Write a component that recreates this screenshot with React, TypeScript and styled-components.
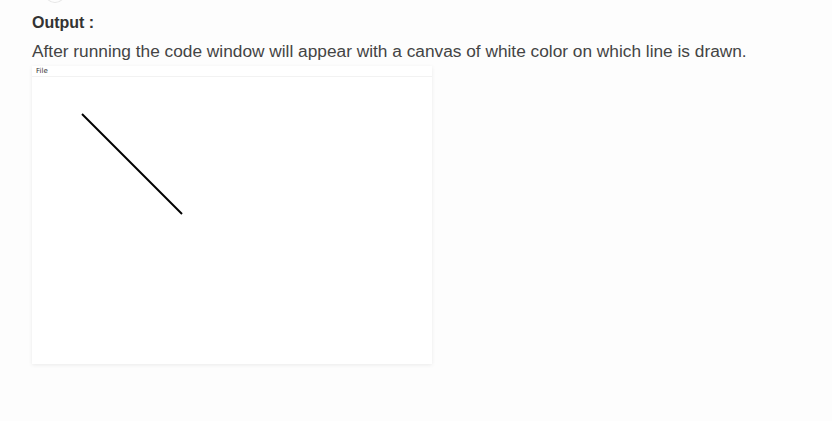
import React from "react"
import styled, { createGlobalStyle } from "styled-components"

const GlobalStyle = createGlobalStyle`
	html, body {
		margin: 0;
		padding: 0;
		background: #fdfdfd;
	}
	body {
		font-family: "Liberation Sans", Arial, sans-serif;
		color: #444;
	}
`

const Page = styled.main`
	position: relative;
	padding: 12px 32px 0 32px;
	height: 421px;
	box-sizing: border-box;
	overflow: hidden;
`

const TopDot = styled.span`
	position: absolute;
	left: 44px;
	top: -20px;
	width: 22px;
	height: 23px;
	border-radius: 50%;
	border: 1px solid #e6e6e6;
	box-sizing: border-box;
`

const Heading = styled.h3`
	margin: 0;
	font-size: 16px;
	font-weight: 700;
	line-height: 22px;
	color: #333;
`

const Text = styled.p`
	margin: 6px 0 0 0;
	font-size: 17.3px;
	line-height: 22px;
	color: #444;
`

const Window = styled.div`
	margin-top: 4px;
	width: 400px;
	height: 298px;
	background: #fff;
	box-shadow: 0 1px 4px rgba(0, 0, 0, 0.08);
	display: flex;
	flex-direction: column;
`

const MenuBar = styled.div`
	height: 10px;
	border-bottom: 1px solid #f2f2f2;
	padding-left: 4px;
	display: flex;
	align-items: center;
	font-family: "DejaVu Sans", sans-serif;
	font-size: 7px;
	color: #333;
`

const Canvas = styled.svg`
	flex: 1;
	display: block;
`

export default function App() {
	return (
		<>
			<GlobalStyle />
			<Page>
				<TopDot />
				<Heading>Output :</Heading>
				<Text>After running the code window will appear with a canvas of white color on which line is drawn.</Text>
				<Window>
					<MenuBar>File</MenuBar>
					<Canvas viewBox="0 0 400 287" width="400" height="287">
						<line x1="50" y1="37" x2="150" y2="137" stroke="#000" strokeWidth="2" />
					</Canvas>
				</Window>
			</Page>
		</>
	)
}
